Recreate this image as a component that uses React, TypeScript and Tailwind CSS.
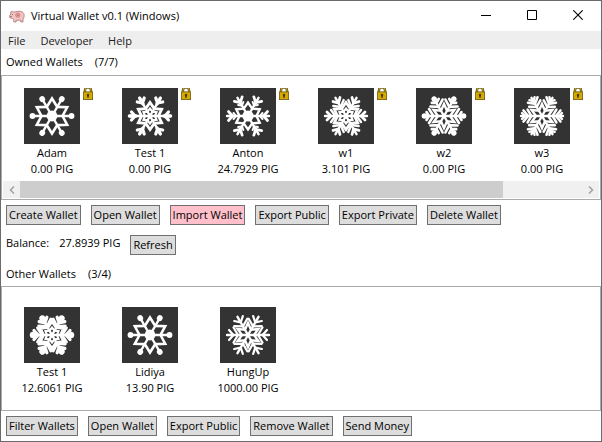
import { type ReactNode } from "react";

type Core = "petal" | "lattice" | "disc" | "diamond";
type Tip = "ball" | "fork" | "vee" | "feather" | "beads" | "dense" | "thin" | "denseBeads";

type Wallet = { name: string; amount: string; core: Core; tip: Tip; locked?: boolean };

const ownedWallets: Wallet[] = [
  { name: "Adam", amount: "0.00 PIG", core: "petal", tip: "ball", locked: true },
  { name: "Test 1", amount: "0.00 PIG", core: "lattice", tip: "fork", locked: true },
  { name: "Anton", amount: "24.7929 PIG", core: "disc", tip: "vee", locked: true },
  { name: "w1", amount: "3.101 PIG", core: "lattice", tip: "feather", locked: true },
  { name: "w2", amount: "0.00 PIG", core: "diamond", tip: "beads", locked: true },
  { name: "w3", amount: "0.00 PIG", core: "diamond", tip: "dense", locked: true },
];

const otherWallets: Wallet[] = [
  { name: "Test 1", amount: "12.6061 PIG", core: "lattice", tip: "denseBeads" },
  { name: "Lidiya", amount: "13.90 PIG", core: "petal", tip: "ball" },
  { name: "HungUp", amount: "1000.00 PIG", core: "diamond", tip: "thin" },
];

const angles = [0, 60, 120, 180, 240, 300];

/* Six-pointed outline: valleys lie on the arms, peaks halfway between them. */
function star(peak: number, valley: number) {
  return Array.from({ length: 12 }, (_, i) => {
    const r = i % 2 ? peak : valley;
    const a = (i * Math.PI) / 6;
    return `${(r * Math.cos(a)).toFixed(2)},${(r * Math.sin(a)).toFixed(2)}`;
  }).join(" ");
}

/* Side branches leaving the arm at radius r, swept outwards. */
function branch(r: number, dx: number, dy: number) {
  return `M${r + dx} ${-dy}L${r} 0L${r + dx} ${dy}`;
}

const tips: Record<Tip, ReactNode> = {
  ball: <circle cx="19.5" cy="0" r="2.9" fill="#fff" stroke="none" />,
  fork: (
    <>
      <path d={branch(15, 3.5, 4)} strokeWidth="3.2" />
      <path d="M14 0H20.500" strokeWidth="3.4" />
    </>
  ),
  vee: (
    <>
      <path d={branch(15.5, 4, 4.5)} strokeWidth="2.8" />
      <path d={branch(12, 2.5, 3)} strokeWidth="2" />
    </>
  ),
  feather: (
    <>
      <path d={branch(10.5, 4.5, 6)} strokeWidth="2.4" />
      <path d={branch(15, 4, 4)} strokeWidth="2.8" />
    </>
  ),
  beads: (
    <>
      <path d={branch(10.5, 4.5, 7)} strokeWidth="2.6" />
      <path d={branch(15, 2.5, 4)} strokeWidth="2.6" />
      <circle cx="19.5" cy="0" r="2.8" fill="#fff" stroke="none" />
    </>
  ),
  dense: (
    <>
      <path d={branch(10.5, 4, 6.5)} strokeWidth="2.4" />
      <path d={branch(14, 4.5, 5.5)} strokeWidth="2.6" />
      <path d={branch(17, 3, 3)} strokeWidth="2.4" />
    </>
  ),
  denseBeads: (
    <>
      <path d={branch(10, 4.5, 7)} strokeWidth="2.8" />
      <path d={branch(14, 4, 4.5)} strokeWidth="3.2" />
      <circle cx="19" cy="0" r="3.2" fill="#fff" stroke="none" />
    </>
  ),
  thin: (
    <>
      <path d={branch(10, 4.5, 7.5)} strokeWidth="2.2" />
      <path d={branch(14.5, 4.5, 5)} strokeWidth="2.2" />
    </>
  ),
};

const cores: Record<Core, ReactNode> = {
  petal: (
    <>
      <polygon points={star(17.5, 10.5)} strokeWidth="2.6" />
      <circle r="5.4" fill="#fff" stroke="none" />
    </>
  ),
  lattice: (
    <>
      <polygon points={star(13.5, 8.5)} strokeWidth="2.8" />
      <polygon points={star(7.5, 5)} strokeWidth="2.2" />
      <circle r="2.6" fill="#fff" stroke="none" />
    </>
  ),
  disc: (
    <>
      <polygon points={star(13.5, 8.5)} strokeWidth="2.4" />
      <circle r="5.6" fill="#fff" stroke="none" />
    </>
  ),
  diamond: <polygon points={star(12, 6)} strokeWidth="2.4" />,
};

function Snowflake({ core, tip }: { core: Core; tip: Tip }) {
  return (
    <svg viewBox="-28 -28 56 56" className="size-14 bg-[#333333]" aria-hidden="true">
      <g fill="none" stroke="#fff" strokeWidth="2.4" strokeLinecap="round">
        {cores[core]}
        {angles.map((a) => (
          <g key={a} transform={`rotate(${a})`}>
            <path d="M0 0H21" />
            {tips[tip]}
          </g>
        ))}
      </g>
    </svg>
  );
}

function Lock() {
  return (
    <svg viewBox="0 0 10 14" className="absolute left-full top-0 ml-[3px] -mt-0.5 h-3.5 w-2.5" aria-hidden="true">
      <path d="M2 6.500V4.300a3 3 0 0 1 6 0V6.500" fill="none" stroke="#5a5018" strokeWidth="2.4" />
      <path d="M2 6.500V4.300a3 3 0 0 1 6 0V6.500" fill="none" stroke="#c8aa2a" strokeWidth="1" />
      <rect x="0.4" y="5.9" width="9.2" height="7.7" fill="#d5a900" stroke="#6e5a10" strokeWidth=".8" />
      <path d="M4.200 8.300h1.600v1.300h-.4V11.600h-.8v-2h-.4z" fill="#221c05" stroke="#221c05" strokeWidth=".4" />
    </svg>
  );
}

function Pig() {
  return (
    <svg viewBox="0 0 16 13" className="h-[13px] w-4" aria-hidden="true">
      <path
        d="M1.600 2 3.400 1.400 5 2.200C7 1.200 11 1 13 1.800c1.500.700 2.200 2 2.200 3.800 0 1.500-.5 2.700-1.200 3.400V12h-2.200v-1.700H7.200V12H4.800V9.500L3.200 8.300.800 7.800V5.200L1.900 4z"
        fill="#f4c4c1"
        stroke="#a97775"
        strokeWidth=".8"
      />
      <circle cx="8.800" cy="5.200" r="2.100" fill="#ecaaa8" stroke="#c07578" strokeWidth=".8" />
      <path d="M3.400 4v1M1.200 6.500h1.400M8 5.200h1.600" stroke="#7d4a4c" strokeWidth=".8" />
    </svg>
  );
}

function WalletItem({ wallet }: { wallet: Wallet }) {
  return (
    <li className="flex w-[98px] shrink-0 flex-col items-center">
      <div className="relative">
        <Snowflake core={wallet.core} tip={wallet.tip} />
        {wallet.locked && <Lock />}
      </div>
      <span className="pt-px">{wallet.name}</span>
      <span>{wallet.amount}</span>
    </li>
  );
}

function Button({ children, pink }: { children: ReactNode; pink?: boolean }) {
  return (
    <button
      type="button"
      className={`flex h-5 items-center whitespace-nowrap border border-[#707070] px-0.5 ${pink ? "bg-[#ffc0cb]" : "bg-[#dddddd]"}`}
    >
      {children}
    </button>
  );
}

function CaptionButton({ label, children }: { label: string; children: ReactNode }) {
  return (
    <button type="button" aria-label={label} className="flex w-[46px] items-center justify-center pb-0.5">
      <svg viewBox="0 0 10 10" className="size-2.5" fill="none" stroke="#000" aria-hidden="true">
        {children}
      </svg>
    </button>
  );
}

function ScrollButton({ label, d }: { label: string; d: string }) {
  return (
    <button type="button" aria-label={label} className="flex w-[17px] items-center justify-center">
      <svg viewBox="0 0 6 8" className="h-2 w-1.5" fill="none" stroke="#a0a0a0" strokeWidth="1.5" aria-hidden="true">
        <path d={d} />
      </svg>
    </button>
  );
}

export default function App() {
  return (
    <div className="border border-[#6b6b6b] bg-white font-['Open_Sans','Noto_Sans',sans-serif] text-[11px] leading-4 text-black">
      <header className="flex h-[30px] items-stretch">
        <div className="flex flex-1 items-center gap-1.5 pl-2">
          <Pig />
          <h1>Virtual Wallet v0.1 (Windows)</h1>
        </div>
        <CaptionButton label="Minimize">
          <path d="M0 5.500H10" />
        </CaptionButton>
        <CaptionButton label="Maximize">
          <path d="M.5.5h9v9h-9z" />
        </CaptionButton>
        <CaptionButton label="Close">
          <path d="M.3.3l9.400 9.400M9.700.3.3 9.700" strokeWidth="1.100" />
        </CaptionButton>
      </header>

      <nav className="flex h-[18px] items-center gap-[15px] bg-[#eeeeee] px-[7px] pt-0.5 text-[#212121]">
        <button type="button">File</button>
        <button type="button">Developer</button>
        <button type="button">Help</button>
      </nav>

      <main>
        <h2 className="flex gap-3 px-[5px] py-[5px]">
          <span>Owned Wallets</span>
          <span>(7/7)</span>
        </h2>
        <section className="border border-[#ababab] p-px pt-3">
          <ul className="flex overflow-hidden pb-1">
            {ownedWallets.map((w) => (
              <WalletItem key={w.name} wallet={w} />
            ))}
          </ul>
          <div className="flex h-[17px] bg-[#f0f0f0]">
            <ScrollButton label="Scroll left" d="M5 .5 1.500 4 5 7.500" />
            <div className="flex-1">
              <div className="h-full w-[86%] bg-[#cdcdcd]" />
            </div>
            <ScrollButton label="Scroll right" d="M1 .5 4.500 4 1 7.500" />
          </div>
        </section>

        <div className="flex gap-2.5 p-[5px]">
          <Button>Create Wallet</Button>
          <Button>Open Wallet</Button>
          <Button pink>Import Wallet</Button>
          <Button>Export Public</Button>
          <Button>Export Private</Button>
          <Button>Delete Wallet</Button>
        </div>
        <div className="flex gap-2.5 p-[5px]">
          <span>Balance:</span>
          <span>27.8939 PIG</span>
          <Button>Refresh</Button>
        </div>

        <h2 className="flex gap-3 px-[5px] pb-1 pt-1.5">
          <span>Other Wallets</span>
          <span>(3/4)</span>
        </h2>
        <section className="border border-[#ababab] px-px pb-3.5 pt-5">
          <ul className="flex flex-wrap">
            {otherWallets.map((w) => (
              <WalletItem key={w.name} wallet={w} />
            ))}
          </ul>
        </section>
        <div className="flex gap-2.5 p-[5px]">
          <Button>Filter Wallets</Button>
          <Button>Open Wallet</Button>
          <Button>Export Public</Button>
          <Button>Remove Wallet</Button>
          <Button>Send Money</Button>
        </div>
      </main>
    </div>
  );
}
